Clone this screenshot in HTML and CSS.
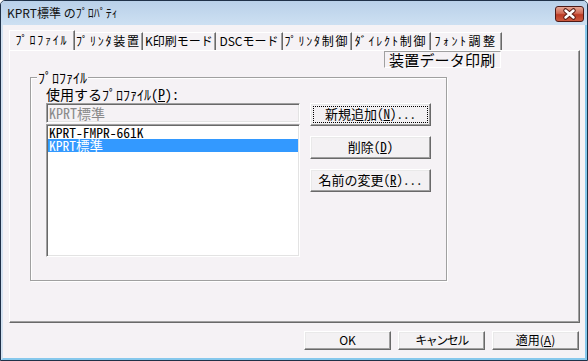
FILE: index.html
```html
<!DOCTYPE html>
<html lang="ja">
<head>
    <meta charset="UTF-8">
    <title>KPRT標準 のﾌﾟﾛﾊﾟﾃｨ</title>
    <link rel="stylesheet" href="styles.css">
</head>
<body>
<div class="window">
    <div class="titlebar">
        <span class="title">KPRT標準 のﾌﾟﾛﾊﾟﾃｨ</span>
        <span class="close">
            <svg width="29" height="16" viewBox="0 0 29 16">
                <path d="M10.5 4.5 L18.5 11.5 M18.5 4.5 L10.5 11.5" stroke="#5a1c14" stroke-width="4.5" stroke-linecap="round"/>
                <path d="M10.5 4.5 L18.5 11.5 M18.5 4.5 L10.5 11.5" stroke="#fff" stroke-width="2.5" stroke-linecap="round"/>
            </svg>
        </span>
    </div>
    <div class="client">
        <div class="tabs">
            <div class="tab active">ﾌﾟﾛﾌｧｲﾙ</div>
            <div class="tab">ﾌﾟﾘﾝﾀ装置</div>
            <div class="tab">K印刷モード</div>
            <div class="tab">DSCモード</div>
            <div class="tab">ﾌﾟﾘﾝﾀ制御</div>
            <div class="tab">ﾀﾞｲﾚｸﾄ制御</div>
            <div class="tab">ﾌｫﾝﾄ調整</div>
        </div>
        <div class="panel">
            <div class="banner-row">
                <div class="banner">装置データ印刷</div>
            </div>
            <div class="group">
                <span class="group-title">ﾌﾟﾛﾌｧｲﾙ</span>
                <div class="group-body">
                    <div class="field-label">使用するﾌﾟﾛﾌｧｲﾙ(<u>P</u>):</div>
                    <div class="picker">
                        <div class="picker-left">
                            <div class="field">KPRT標準</div>
                            <ul class="list">
                                <li>KPRT-FMPR-661K</li>
                                <li class="selected">KPRT標準</li>
                            </ul>
                        </div>
                        <div class="actions">
                            <div class="btn focused">新規追加(<u>N</u>)...</div>
                            <div class="btn">削除(<u>D</u>)</div>
                            <div class="btn">名前の変更(<u>R</u>)...</div>
                        </div>
                    </div>
                </div>
            </div>
        </div>
        <div class="footer">
            <div class="btn small">OK</div>
            <div class="btn small narrow">キャンセル</div>
            <div class="btn small">適用(<u>A</u>)</div>
        </div>
    </div>
</div>
</body>
</html>
```

FILE: styles.css
```css
body {
    margin: 0;
    background: #fff;
    font-family: "Noto Sans CJK JP", sans-serif;
    font-size: 12px;
    color: #000;
}

.window {
    width: 588px;
    height: 361px;
    box-sizing: border-box;
    border: 1px solid #1f3148;
    border-radius: 5px 5px 0 0;
    display: flex;
    flex-direction: column;
    background: #c9dcef;
    overflow: hidden;
}

.titlebar {
    height: 24px;
    flex: none;
    display: flex;
    align-items: center;
    justify-content: space-between;
    padding: 0 3px 0 6px;
    background: linear-gradient(#b9d0e9, #cde0f2);
}

.title {
    font-size: 12px;
    line-height: 14px;
    color: #111;
}

.close {
    width: 29px;
    height: 16px;
    box-sizing: border-box;
    border: 1px solid #4d1a17;
    border-radius: 3px;
    background: linear-gradient(#e6a796, #d06a55 45%, #bb3b25 55%, #cc5a3f);
    display: flex;
    align-items: center;
    justify-content: center;
    margin-top: 2px;
}

.close svg {
    display: block;
    margin: -1px;
}

.client {
    flex: 1;
    display: flex;
    flex-direction: column;
    background: #f5f2f5;
    border-left: 2px solid #d3e2f1;
    border-right: 2px solid #86c8ec;
    border-bottom: 2px solid #86c8ec;
    padding: 5px 5px 0 6px;
}

/* タブ */
.tabs {
    display: flex;
    align-items: flex-end;
    height: 20px;
}

.tab {
    height: 18px;
    box-sizing: border-box;
    border-top: 1px solid #fff;
    border-right: 1px solid #696969;
    box-shadow: inset -1px 0 #a0a0a0;
    text-align: center;
    line-height: 16px;
    font-size: 12px;
    letter-spacing: 1.8px;
    white-space: nowrap;
}

.tab.active {
    height: 20px;
    border-left: 1px solid #fff;
    line-height: 18px;
}

.tab:nth-child(1) { width: 66px; }
.tab:nth-child(2) { width: 68px; }
.tab:nth-child(3) { width: 73px; letter-spacing: 0; }
.tab:nth-child(4) { width: 67px; letter-spacing: 0; }
.tab:nth-child(5) { width: 69px; }
.tab:nth-child(6) { width: 79px; }
.tab:nth-child(7) { width: 71px; letter-spacing: 2.5px; }

.panel {
    height: 273px;
    box-sizing: border-box;
    border-top: 1px solid #fff;
    border-left: 1px solid #fff;
    border-right: 1px solid #696969;
    border-bottom: 1px solid #696969;
    box-shadow: inset -1px -1px #a0a0a0;
}

.banner-row {
    display: flex;
    padding-left: 374px;
}

.banner {
    width: 117px;
    height: 17px;
    box-sizing: border-box;
    border: 1px solid;
    border-color: #a0a0a0 #fff #fff #a0a0a0;
    padding-left: 4px;
    font-size: 15px;
    line-height: 15px;
    letter-spacing: 0.2px;
    white-space: nowrap;
}

/* グループ */
.group {
    margin: 9px 0 0 20px;
    width: 417px;
    height: 204px;
    box-sizing: border-box;
    border: 1px solid #a0a0a0;
    box-shadow: inset 1px 1px #fff, 1px 1px #fff;
    display: flex;
    flex-direction: column;
    align-items: flex-start;
    font-family: "Noto Sans Mono CJK JP", "Noto Sans CJK JP", monospace;
    font-size: 14px;
}

.group-title {
    margin: -8px 0 0 6px;
    padding: 0 1px;
    background: #f5f2f5;
    line-height: 14px;
}

.group-body {
    padding-left: 15px;
    margin-top: 3px;
}

.field-label {
    line-height: 14px;
}

.picker {
    display: flex;
    gap: 10px;
    margin-top: 2px;
}

.field,
.list {
    border: 1px solid;
    border-color: #a0a0a0 #fff #fff #a0a0a0;
    box-shadow: inset 1px 1px #696969, inset -1px -1px #e3e3e3;
    box-sizing: border-box;
}

.field {
    width: 254px;
    height: 20px;
    padding-left: 2px;
    line-height: 18px;
    color: #8a8a8a;
}

.list {
    width: 254px;
    height: 133px;
    margin: 1px 0 0;
    padding: 1px;
    list-style: none;
    background: #fff;
    font-size: 13.5px;
}

.list li {
    line-height: 13px;
    height: 13px;
    padding-left: 1px;
    white-space: nowrap;
}

.list li.selected {
    background: #3399ff;
    color: #fff;
}

.actions {
    display: flex;
    flex-direction: column;
    gap: 10px;
}

.btn {
    width: 121px;
    height: 23px;
    box-sizing: border-box;
    border: 1px solid;
    border-color: #fff #696969 #696969 #fff;
    box-shadow: inset -1px -1px #a0a0a0, inset 1px 1px #e9e9e9;
    background: #f3f1f3;
    text-align: center;
    font-size: 13px;
    line-height: 20px;
    white-space: nowrap;
}

.btn.focused {
    outline: 1px dotted #000;
    outline-offset: -4px;
}

.footer {
    display: flex;
    justify-content: flex-end;
    gap: 7px;
    margin-top: 8px;
    padding-right: 1px;
}

.btn.small {
    width: 87px;
    height: 19px;
    font-family: "Noto Sans CJK JP", sans-serif;
    font-size: 12px;
    line-height: 16px;
}

.btn.narrow {
    letter-spacing: -1.5px;
}
```
